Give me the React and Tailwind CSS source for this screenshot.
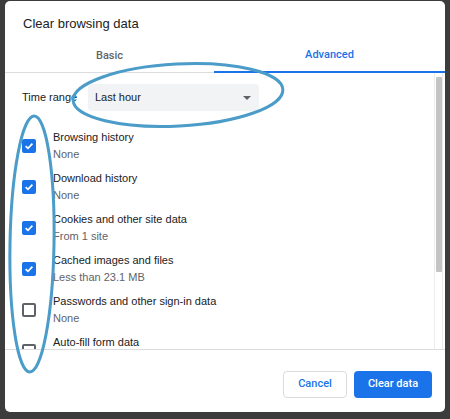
import React from "react";

const items = [
  { title: "Browsing history", sub: "None", checked: true },
  { title: "Download history", sub: "None", checked: true },
  { title: "Cookies and other site data", sub: "From 1 site", checked: true },
  { title: "Cached images and files", sub: "Less than 23.1 MB", checked: true },
  { title: "Passwords and other sign-in data", sub: "None", checked: false },
  { title: "Auto-fill form data", sub: "None", checked: false },
];

function Checkbox({ checked }) {
  if (checked) {
    return (
      <div className="w-[14px] h-[14px] rounded-[2px] bg-[#1a73e8] flex items-center justify-center shrink-0">
        <svg width="10" height="10" viewBox="0 0 10 10">
          <path d="M1.6 5.2 L4 7.4 L8.4 2.6" fill="none" stroke="white" strokeWidth="1.7" />
        </svg>
      </div>
    );
  }
  return <div className="w-[14px] h-[14px] rounded-[2px] border-2 border-[#5f6368] shrink-0" />;
}

export default function App() {
  return (
    <div
      className="w-[450px] h-[419px] bg-[#3c3c3c] relative overflow-hidden pt-[1px] pl-[5px]"
      style={{ fontFamily: '"Liberation Sans", Arial, sans-serif' }}
    >
      <div className="w-[440px] h-[411px] bg-white rounded-[5px] flex flex-col overflow-hidden">
        {/* header */}
        <div className="pt-[15px] pl-[18px] h-[39px] text-[13px] leading-[16px] text-[#202124]">
          Clear browsing data
        </div>

        {/* tabs */}
        <div className="flex h-[33px] border-b border-[#dadce0] text-[11px]">
          <div className="w-[209px] flex items-center justify-center text-[#5f6368] font-medium" style={{ fontFamily: "Roboto, sans-serif" }}>
            Basic
          </div>
          <div className="flex-1 flex items-center justify-center text-[#1a73e8] font-medium border-b-2 border-[#1a73e8] mb-[-1px]" style={{ fontFamily: "Roboto, sans-serif" }}>
            Advanced
          </div>
        </div>

        {/* scroll area */}
        <div className="flex h-[277px] border-b border-[#dadce0]">
          <div className="flex-1 overflow-hidden pl-[17px] text-[11px] text-[#202124]">
            <div className="flex items-center pt-[11px] h-[38px]">
              <span className="w-[66px]">Time range</span>
              <div className="w-[171px] h-[27px] bg-[#f1f3f4] rounded-[4px] flex items-center justify-between pl-[7px] pr-[8px]">
                <span>Last hour</span>
                <svg width="8" height="4" viewBox="0 0 8 4">
                  <path d="M0 0 L8 0 L4 4 Z" fill="#5f6368" />
                </svg>
              </div>
            </div>
            <div className="pt-[14px]">
              {items.map((item) => (
                <div key={item.title} className="flex items-center h-[41px]">
                  <div className="w-[31px]">
                    <Checkbox checked={item.checked} />
                  </div>
                  <div className="flex flex-col leading-[17px]">
                    <span>{item.title}</span>
                    <span className="text-[#5f6368]">{item.sub}</span>
                  </div>
                </div>
              ))}
            </div>
          </div>
          <div className="w-[9px] mr-[2px] border-l border-r border-[#ececec] pt-[4px] flex justify-center">
            <div className="w-[6px] h-[195px] bg-[#c4c4c4] rounded-[1px]" />
          </div>
        </div>

        {/* footer */}
        <div className="flex-1 flex justify-end items-start pt-[21px] pr-[13px] gap-[7px] text-[11px]" style={{ fontFamily: "Roboto, sans-serif" }}>
          <button className="w-[64px] h-[27px] rounded-[4px] border border-[#dadce0] bg-white text-[#1a73e8] font-medium">
            Cancel
          </button>
          <button className="w-[78px] h-[27px] rounded-[4px] bg-[#1a73e8] text-white font-medium">
            Clear data
          </button>
        </div>
      </div>

      {/* annotations */}
      <svg className="absolute left-0 top-0 pointer-events-none" width="450" height="419" viewBox="0 0 450 419">
        <ellipse cx="178" cy="95" rx="105" ry="31" transform="rotate(-3 178 95)" fill="none" stroke="#4b9cc8" strokeWidth="3" />
        <ellipse cx="32" cy="244" rx="22" ry="128" transform="rotate(1 32 244)" fill="none" stroke="#4b9cc8" strokeWidth="3" />
      </svg>
    </div>
  );
}
